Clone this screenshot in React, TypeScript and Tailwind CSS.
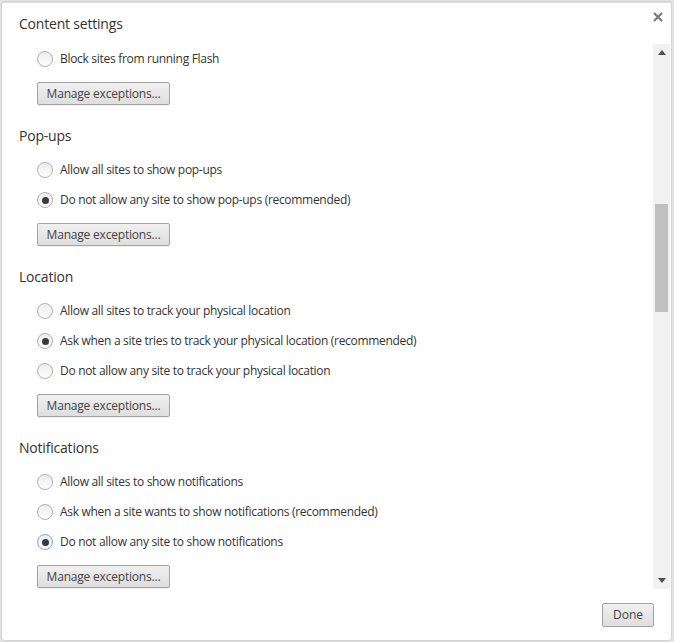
import React from "react";

const font = { fontFamily: '"Open Sans", "Noto Sans", sans-serif' };

function Radio({ checked, focus, label }: { checked?: boolean; focus?: boolean; label: string }) {
  return (
    <div className="flex h-[30px] items-center pl-[35px]">
      <span
        className={
          "flex h-[16px] w-[16px] shrink-0 items-center justify-center rounded-full border bg-gradient-to-b from-[#ededed] to-[#fdfdfd] " +
          (focus ? "border-[#7aa7e8]" : "border-[#b0b0b0]")
        }
      >
        {checked && <span className="h-[7px] w-[7px] rounded-full bg-[#3a3a3a]" />}
      </span>
      <span className="ml-[7px] text-[12px] tracking-[-0.3px] text-[#333]">{label}</span>
    </div>
  );
}

function ManageButton({ mt = "mt-[8px]" }: { mt?: string }) {
  return (
    <div className={"pl-[35px] " + mt}>
      <button className="flex h-[23px] w-[133px] items-center justify-center rounded-[2px] border border-[#a3a3a3] bg-gradient-to-b from-[#f0f0f0] to-[#dedede] text-[12px] tracking-[-0.2px] text-[#444] shadow-[0_1px_0_rgba(0,0,0,0.06)]">
        Manage exceptions...
      </button>
    </div>
  );
}

function Heading({ children }: { children: React.ReactNode }) {
  return (
    <div className="mt-[20px] mb-[10px] flex h-[20px] items-center pl-[17px] text-[14px] tracking-[-0.2px] text-[#333]">{children}</div>
  );
}

export default function App() {
  return (
    <div className="h-[642px] w-[674px] bg-[#e4e4e4] p-[2px] pr-[3px]" style={font}>
      <div className="relative flex h-[638px] flex-col rounded-[2px] border-t border-[#dcdcdc] bg-white shadow-[0_0_2px_rgba(0,0,0,0.25)]">
        <div className="flex h-[41px] items-center justify-between pl-[17px] pr-[8px]">
          <span className="text-[14px] tracking-[-0.2px] text-[#333]">Content settings</span>
          <svg width="10" height="10" viewBox="0 0 10 10" className="mb-[13px]">
            <path d="M1 1 L9 9 M9 1 L1 9" stroke="#7a7a7a" strokeWidth="2.2" />
          </svg>
        </div>
        <div className="flex h-[545px]">
          <div className="flex-1 overflow-hidden">
            <Radio label="Block sites from running Flash" />
            <ManageButton />
            <Heading>Pop-ups</Heading>
            <Radio label="Allow all sites to show pop-ups" />
            <Radio checked label="Do not allow any site to show pop-ups (recommended)" />
            <ManageButton />
            <Heading>Location</Heading>
            <Radio label="Allow all sites to track your physical location" />
            <Radio checked label="Ask when a site tries to track your physical location (recommended)" />
            <Radio label="Do not allow any site to track your physical location" />
            <ManageButton />
            <Heading>Notifications</Heading>
            <Radio label="Allow all sites to show notifications" />
            <Radio label="Ask when a site wants to show notifications (recommended)" />
            <Radio checked focus label="Do not allow any site to show notifications" />
            <ManageButton />
          </div>
          <div className="mr-[1px] flex w-[17px] flex-col bg-[#f1f1f1]">
            <div className="flex h-[17px] items-center justify-center">
              <svg width="8" height="5" viewBox="0 0 8 5">
                <path d="M0 5 L4 0 L8 5 Z" fill="#505050" />
              </svg>
            </div>
            <div className="mt-[143px] mx-[2px] h-[108px] bg-[#c1c1c1]" />
            <div className="flex-1" />
            <div className="flex h-[17px] items-center justify-center">
              <svg width="8" height="5" viewBox="0 0 8 5">
                <path d="M0 0 L8 0 L4 5 Z" fill="#505050" />
              </svg>
            </div>
          </div>
        </div>
        <div className="flex flex-1 items-start justify-end pr-[17px] pt-[14px]">
          <button className="flex h-[24px] w-[52px] items-center justify-center rounded-[2px] border border-[#a3a3a3] bg-gradient-to-b from-[#f0f0f0] to-[#dedede] text-[12px] text-[#444]">
            Done
          </button>
        </div>
      </div>
    </div>
  );
}
